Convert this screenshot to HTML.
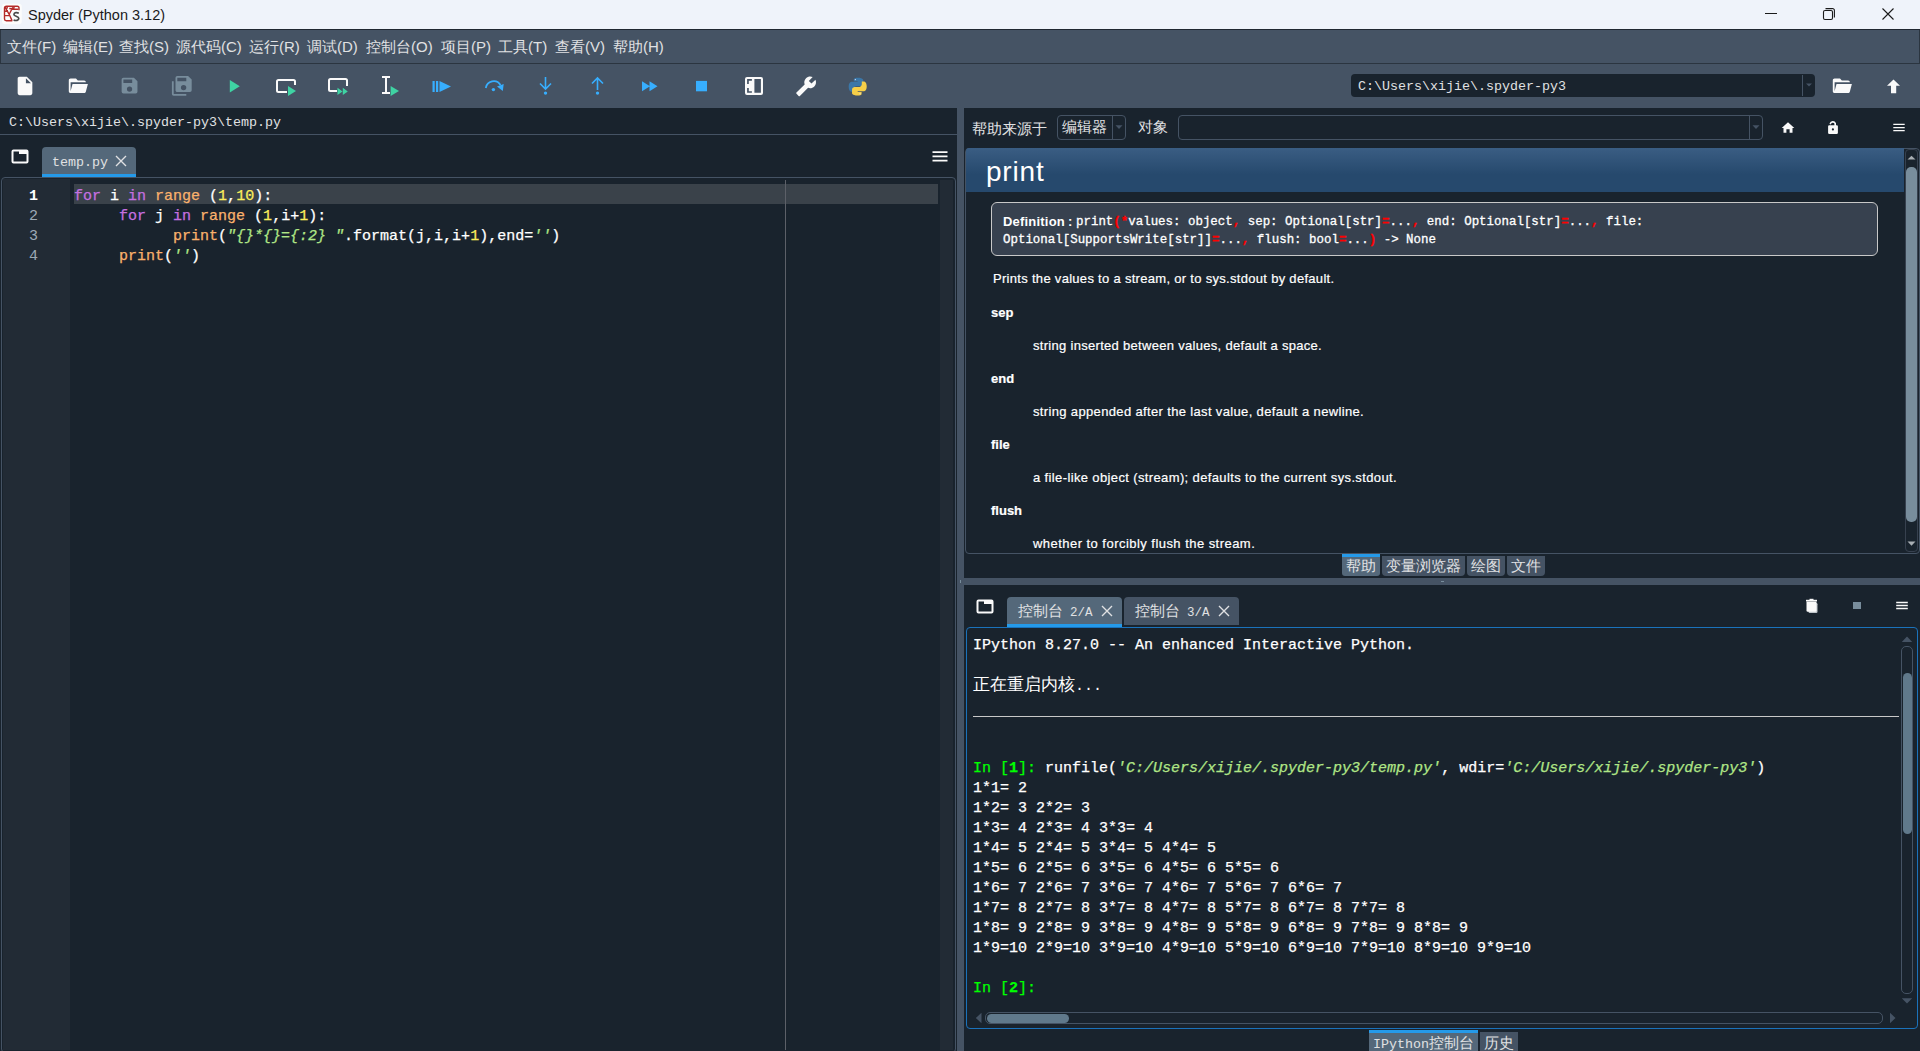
<!DOCTYPE html>
<html><head><meta charset="utf-8">
<style>
*{box-sizing:border-box}
html,body{margin:0;padding:0}
body{width:1920px;height:1051px;overflow:hidden;position:relative;background:#19232D;font-family:"Liberation Sans",sans-serif;color:#E0E1E3}
.a{position:absolute}
.mono{font-family:"Liberation Mono",monospace}
.cs{-webkit-text-stroke-width:0.25px}
.mi{position:absolute;top:37px;font-size:15px;line-height:20px;color:#E0E1E3;white-space:nowrap}
.ic{position:absolute}
.hp{position:absolute;font-size:13px;line-height:18px;letter-spacing:0.35px;-webkit-text-stroke-width:0.2px;color:#FFFFFF;white-space:nowrap}
.tab{position:absolute;border-radius:4px 4px 0 0;white-space:nowrap;color:#E0E1E3}
</style></head><body>
<!-- title bar -->
<div class="a" style="left:0;top:0;width:1920px;height:29px;background:#EFF3FA"></div>
<div class="a" style="left:0;top:29px;width:1920px;height:1px;background:#1F2730"></div>
<!-- spyder icon -->
<svg class="ic" style="left:0;top:0" width="26" height="28" viewBox="0 0 26 28">
<rect x="2" y="3.7" width="19.8" height="20.6" rx="3" fill="#FCFCFC"/>
<g fill="none" stroke="#B42A2A" stroke-width="1.4" stroke-linejoin="round">
<path d="M12.3,20.8 H6.3 A1.8,1.8 0 0 1 4.5,19 V8.3 A2,2 0 0 1 6.5,6.3 H17.2 A1.8,1.8 0 0 1 19,8.1 V10.2"/>
<path d="M5,7.2 L9.2,14.3 L12,20.6 M12.8,7.2 L9.2,14.3 M9.3,8.5 L18.5,9.3 M4.6,11.3 L8,11 M4.6,15.6 L9.6,15.4 M7.4,6.5 L6.8,8.8 M14.2,6.6 L13.6,9"/>
</g>
<path d="M18.8,13.2 C17.2,12.3 14.2,12.3 13.9,14.3 C13.6,16.4 18.6,16 18.8,18.3 C19,20.4 15.8,21 13.6,20" fill="none" stroke="#4A4A4A" stroke-width="1.7"/>
</svg>
<div class="a" style="left:28px;top:6px;font-size:14.5px;line-height:18px;color:#1A1A1A;white-space:nowrap">Spyder (Python 3.12)</div>
<!-- window controls -->
<div class="a" style="left:1765px;top:13px;width:12px;height:1px;background:#1A1A1A"></div>
<svg class="ic" style="left:1822px;top:7px" width="14" height="14" viewBox="0 0 14 14"><rect x="1.5" y="3.5" width="9" height="9" rx="1.5" fill="none" stroke="#1A1A1A" stroke-width="1.1"/><path d="M3.5 1.6 H10 A2 2 0 0 1 12.4 4 V10.5" fill="none" stroke="#1A1A1A" stroke-width="1.1"/></svg>
<svg class="ic" style="left:1882px;top:8px" width="12" height="12" viewBox="0 0 12 12"><path d="M0.5 0.5 L11.5 11.5 M11.5 0.5 L0.5 11.5" stroke="#1A1A1A" stroke-width="1.1"/></svg>

<!-- menu bar -->
<div class="a" style="left:0;top:30px;width:1920px;height:33px;background:#455364"></div>
<div class="a" style="left:0;top:30px;width:1px;height:33px;background:#2B3540"></div><div class="a" style="left:1919px;top:30px;width:1px;height:33px;background:#2B3540"></div>
<div class="mi" style="left:7px">文件(F)</div>
<div class="mi" style="left:63px">编辑(E)</div>
<div class="mi" style="left:119px">查找(S)</div>
<div class="mi" style="left:176px">源代码(C)</div>
<div class="mi" style="left:249px">运行(R)</div>
<div class="mi" style="left:307px">调试(D)</div>
<div class="mi" style="left:366px">控制台(O)</div>
<div class="mi" style="left:441px">项目(P)</div>
<div class="mi" style="left:498px">工具(T)</div>
<div class="mi" style="left:555px">查看(V)</div>
<div class="mi" style="left:613px">帮助(H)</div>

<div class="a" style="left:0;top:63px;width:1920px;height:1px;background:#2B3540"></div>
<!-- toolbar -->
<div class="a" style="left:0;top:64px;width:1920px;height:44px;background:#455364"></div>
<!-- toolbar icons -->
<svg class="ic" style="left:14.3px;top:75.2px" width="22" height="22" viewBox="0 0 24 24"><path fill="#FAFAFA" d="M13,9V3.5L18.5,9M6,2C4.89,2 4,2.89 4,4V20A2,2 0 0,0 6,22H18A2,2 0 0,0 20,20V8L14,2H6Z"/></svg>
<svg class="ic" style="left:66.7px;top:75.2px" width="21.6" height="21.6" viewBox="0 0 24 24"><path fill="#FAFAFA" d="M19,20H4C2.89,20 2,19.1 2,18V6C2,4.89 2.89,4 4,4H10L12,6H19A2,2 0 0,1 21,8H21L4,8V18L6.14,10H23.21L20.93,18.5C20.7,19.37 19.92,20 19,20Z"/></svg>
<svg class="ic" style="left:118.9px;top:75.4px" width="21.1" height="21.1" viewBox="0 0 24 24"><path fill="#788D9C" d="M15,9H5V5H15M12,19A3,3 0 0,1 9,16A3,3 0 0,1 12,13A3,3 0 0,1 15,16A3,3 0 0,1 12,19M17,3H5C3.89,3 3,3.9 3,5V19A2,2 0 0,0 5,21H19A2,2 0 0,0 21,19V7L17,3Z"/></svg>
<svg class="ic" style="left:170.6px;top:75px" width="21.6" height="21.6" viewBox="0 0 24 24"><path fill="#788D9C" d="M17,7V3H7V7H17M14,17A3,3 0 0,0 17,14A3,3 0 0,0 14,11A3,3 0 0,0 11,14A3,3 0 0,0 14,17M19,1L23,5V17A2,2 0 0,1 21,19H7C5.89,19 5,18.1 5,17V3A2,2 0 0,1 7,1H19M1,7H3V21H17V23H3A2,2 0 0,1 1,21V7Z"/></svg>
<svg class="ic" style="left:0;top:64px" width="960" height="44" viewBox="0 64 960 44">
 <!-- run -->
 <path fill="#3FD3A3" d="M229.8,80 L239.8,86.25 L229.8,92.5Z"/>
 <!-- run cell -->
 <path fill="none" stroke="#FAFAFA" stroke-width="2" d="M287,92 H278.5 A1.5,1.5 0 0 1 277,90.5 V81.5 A1.5,1.5 0 0 1 278.5,80 H293.5 A1.5,1.5 0 0 1 295,81.5 V85"/>
 <path fill="#3FD3A3" d="M288,86 L296,91 L288,96Z"/>
 <!-- run cell advance -->
 <path fill="none" stroke="#FAFAFA" stroke-width="2" d="M337,91 H330.5 A1.5,1.5 0 0 1 329,89.5 V80.5 A1.5,1.5 0 0 1 330.5,79 H345.5 A1.5,1.5 0 0 1 347,80.5 V86"/>
 <path fill="#3FD3A3" d="M337.5,87.8 L342.5,91.4 L337.5,95Z M342.8,87.8 L347.8,91.4 L342.8,95Z"/>
 <!-- run selection -->
 <path fill="none" stroke="#FAFAFA" stroke-width="2" d="M382,77 H390 M382,93 H390 M386,77 V93"/>
 <path fill="#3FD3A3" d="M390.6,86 L399,91 L390.6,96Z"/>
 <!-- debug -->
 <path fill="#37AEFE" d="M432.5,81 H434.7 V92 H432.5Z M436,81 H438.2 V92 H436Z M439.5,81 L451,86.5 L439.5,92Z"/>
 <!-- step over -->
 <path fill="none" stroke="#37AEFE" stroke-width="1.8" d="M485.8,88 A8,8 0 0 1 500.5,85"/>
 <path fill="#37AEFE" d="M497,86.5 L503.7,84 L502.8,91 Z"/>
 <circle cx="493.4" cy="89.6" r="1.7" fill="#37AEFE"/>
 <!-- step into -->
 <path fill="none" stroke="#37AEFE" stroke-width="1.6" d="M545.5,77 V89 M540,83.5 L545.5,89 L551,83.5"/>
 <circle cx="545.5" cy="93.1" r="1.7" fill="#37AEFE"/>
 <!-- step out -->
 <path fill="none" stroke="#37AEFE" stroke-width="1.6" d="M597.5,78 V90 M592,83.5 L597.5,78 L603,83.5"/>
 <circle cx="597.5" cy="93.1" r="1.7" fill="#37AEFE"/>
 <!-- continue -->
 <path fill="#37AEFE" d="M642,81.2 L650,86.2 L642,91.2Z M649.5,81.2 L657.5,86.2 L649.5,91.2Z"/>
 <!-- stop -->
 <rect x="696" y="80.9" width="11" height="10.4" fill="#37AEFE"/>
 <!-- maximize -->
 <path fill="#FAFAFA" fill-rule="evenodd" d="M747,77 H761 A2,2 0 0 1 763,79 V93 A2,2 0 0 1 761,95 H747 A2,2 0 0 1 745,93 V79 A2,2 0 0 1 747,77Z M754.4,79.1 H760.9 V92.7 H754.4Z M747.1,79.1 H751.9 V80.8 H748.8 V83.9 H747.1Z M747.1,87.9 H748.8 V91.3 H751.9 V92.7 H747.1Z"/>
 <!-- wrench -->
 <g transform="translate(816.9,75.5) scale(-0.9,0.9)"><path fill="#FAFAFA" d="M22.7,19L13.6,9.9C14.5,7.6 14,4.9 12.1,3C10.1,1 7.1,0.6 4.7,1.7L9,6L6,9L1.6,4.7C0.4,7.1 0.9,10.1 2.9,12.1C4.8,14 7.5,14.5 9.8,13.6L18.9,22.7C19.3,23.1 19.9,23.1 20.3,22.7L22.6,20.4C23.1,20 23.1,19.3 22.7,19Z"/></g>
 <g transform="translate(857.7,86.6) scale(0.93) translate(-857.7,-86.6)">
 <!-- python -->
 <path fill="#3B77A8" d="M857.6,77 C853.2,77 853.5,78.9 853.5,78.9 L853.5,80.9 L857.7,80.9 L857.7,81.5 L851.8,81.5 C851.8,81.5 848,81.1 848,86.7 C848,92.3 851.3,92.1 851.3,92.1 L853.3,92.1 L853.3,89.5 C853.3,89.5 853.2,86.2 856.5,86.2 L860.7,86.2 C860.7,86.2 863.8,86.3 863.8,83.2 L863.8,80 C863.8,80 864.3,77 857.6,77Z"/>
 <path fill="#F6CF48" d="M857.8,96.2 C862.2,96.2 861.9,94.3 861.9,94.3 L861.9,92.3 L857.7,92.3 L857.7,91.7 L863.6,91.7 C863.6,91.7 867.4,92.1 867.4,86.5 C867.4,80.9 864.1,81.1 864.1,81.1 L862.1,81.1 L862.1,83.7 C862.1,83.7 862.2,87 858.9,87 L854.7,87 C854.7,87 851.6,86.9 851.6,90 L851.6,93.2 C851.6,93.2 851.1,96.2 857.8,96.2Z"/>
 <circle cx="855.2" cy="79" r="0.7" fill="#DDE"/>
 <circle cx="860.2" cy="94.2" r="0.7" fill="#DDE"/>
 </g>
</svg>
<!-- working dir combo -->
<div class="a" style="left:1351px;top:74px;width:464px;height:23px;background:#19232D;border-radius:4px"></div>
<div class="a" style="left:1802px;top:75px;width:1px;height:21px;background:#455364"></div>
<svg class="ic" style="left:1804px;top:80px" width="10" height="10" viewBox="0 0 10 10"><path d="M2,3.5 L8,3.5 L5,6.5Z" fill="#455364"/></svg>
<div class="a mono" style="left:1358px;top:78px;font-size:13.33px;line-height:18px;color:#E0E1E3;white-space:nowrap">C:\Users\xijie\.spyder-py3</div>
<svg class="ic" style="left:1830.5px;top:75px" width="21.6" height="21.6" viewBox="0 0 24 24"><path fill="#FAFAFA" d="M19,20H4C2.89,20 2,19.1 2,18V6C2,4.89 2.89,4 4,4H10L12,6H19A2,2 0 0,1 21,8H21L4,8V18L6.14,10H23.21L20.93,18.5C20.7,19.37 19.92,20 19,20Z"/></svg>
<svg class="ic" style="left:1885px;top:76px" width="17" height="20" viewBox="0 0 17 20"><path fill="#FAFAFA" d="M8.5,3.5 L15,9.7 L11.2,9.7 L11.2,17.3 L6,17.3 L6,9.7 L2,9.7Z"/></svg>



<!-- ===== EDITOR PANE ===== -->
<div class="a mono" style="left:9px;top:114px;font-size:13.33px;line-height:18px;color:#E0E1E3;white-space:nowrap">C:\Users\xijie\.spyder-py3\temp.py</div>
<div class="a" style="left:0;top:134px;width:957px;height:1px;background:#455364"></div>
<svg class="ic" style="left:11px;top:149px" width="18" height="15" viewBox="0 0 18 15"><rect x="1.5" y="1.5" width="15" height="12" rx="1" fill="none" stroke="#FAFAFA" stroke-width="2"/><rect x="8" y="1" width="9" height="4" fill="#FAFAFA"/></svg>
<div class="tab" style="left:42px;top:147px;width:94px;height:30px;background:#54687A"></div>
<div class="a" style="left:42px;top:174px;width:94px;height:3px;background:#259AE9"></div>
<div class="a mono" style="left:52px;top:154px;font-size:13.33px;line-height:18px;color:#E0E1E3;white-space:nowrap">temp.py</div>
<svg class="ic" style="left:115px;top:155px" width="12" height="12" viewBox="0 0 12 12"><path d="M1,1 L11,11 M11,1 L1,11" stroke="#E0E1E3" stroke-width="1.35"/></svg>
<svg class="ic" style="left:932px;top:151px" width="16" height="11" viewBox="0 0 16 11"><path d="M0.5,1.2 H15.5 M0.5,5.4 H15.5 M0.5,9.6 H15.5" stroke="#FAFAFA" stroke-width="1.8"/></svg>
<!-- editor frame -->
<div class="a" style="left:1px;top:177px;width:955px;height:876px;border:1px solid #455364;border-radius:4px"></div>
<div class="a" style="left:3px;top:179px;width:67px;height:871px;background:#222B35"></div>
<div class="a" style="left:940px;top:180px;width:13px;height:870px;background:#222B35"></div>
<div class="a" style="left:74px;top:184px;width:864px;height:20px;background:#3A424A"></div>
<div class="a" style="left:785px;top:180px;width:1px;height:870px;background:#5C6068"></div>
<div class="a mono" style="left:0;top:187px;width:70px;font-size:15px;line-height:20px;color:#9DA9B5">
<div style="position:absolute;left:29px;top:0;color:#FFFFFF;font-weight:bold">1</div>
<div style="position:absolute;left:29px;top:20px">2</div>
<div style="position:absolute;left:29px;top:40px">3</div>
<div style="position:absolute;left:29px;top:60px">4</div>
</div>
<div class="a mono cs" style="left:74px;top:187px;font-size:15px;line-height:20px;color:#FFFFFF;white-space:pre"><div><span style="color:#C670E0">for</span> i <span style="color:#C670E0">in</span> <span style="color:#FAB16C">range</span> (<span style="color:#FAED5C">1</span>,<span style="color:#FAED5C">10</span>):</div><div>     <span style="color:#C670E0">for</span> j <span style="color:#C670E0">in</span> <span style="color:#FAB16C">range</span> (<span style="color:#FAED5C">1</span>,i+<span style="color:#FAED5C">1</span>):</div><div>           <span style="color:#FAB16C">print</span>(<span style="color:#B0E686;font-style:italic">"{}*{}={:2} "</span>.format(j,i,i+<span style="color:#FAED5C">1</span>),end=<span style="color:#B0E686;font-style:italic">''</span>)</div><div>     <span style="color:#FAB16C">print</span>(<span style="color:#B0E686;font-style:italic">''</span>)</div></div>


<!-- ===== HELP PANE ===== -->
<div class="mi" style="left:972px;top:118.5px">帮助来源于</div>
<div class="a" style="left:1057px;top:115px;width:69px;height:25px;border:1px solid #455364;border-radius:4px"></div>
<div class="a" style="left:1112px;top:116px;width:1px;height:23px;background:#455364"></div>
<svg class="ic" style="left:1114px;top:122px" width="10" height="10" viewBox="0 0 10 10"><path d="M1.5,3.2 L8.5,3.2 L5,7Z" fill="#455364"/></svg>
<div class="mi" style="left:1062px;top:116.5px">编辑器</div>
<div class="mi" style="left:1138px;top:117px">对象</div>
<div class="a" style="left:1178px;top:115px;width:585px;height:25px;border:1px solid #455364;border-radius:4px"></div>
<div class="a" style="left:1749px;top:116px;width:1px;height:23px;background:#455364"></div>
<svg class="ic" style="left:1751px;top:122px" width="10" height="10" viewBox="0 0 10 10"><path d="M1.5,3.2 L8.5,3.2 L5,7Z" fill="#455364"/></svg>
<svg class="ic" style="left:1781px;top:121px" width="14" height="13" viewBox="0 0 14 13"><path fill="#FAFAFA" d="M7,1.3 L13.3,7 L11.5,7 L11.5,11.8 L8.6,11.8 L8.6,8.3 L5.4,8.3 L5.4,11.8 L2.5,11.8 L2.5,7 L0.7,7Z"/></svg>
<svg class="ic" style="left:1827px;top:120px" width="12" height="15" viewBox="0 0 12 15"><path fill="none" stroke="#FAFAFA" stroke-width="1.6" stroke-linecap="round" d="M3.4,3.6 A2.6,2.6 0 0 1 8.2,3.3 V6"/><rect x="1.1" y="5.2" width="9.8" height="8.8" rx="1.2" fill="#FAFAFA"/><circle cx="5.9" cy="9.4" r="1.1" fill="#19232D"/></svg>
<svg class="ic" style="left:1893px;top:123px" width="12" height="9" viewBox="0 0 12 9"><path d="M0.3,1.4 H11.7 M0.3,4.6 H11.7 M0.3,7.6 H11.7" stroke="#FAFAFA" stroke-width="1.2"/></svg>
<!-- help frame -->
<div class="a" style="left:965px;top:148px;width:955px;height:406px;border:1px solid #455364;border-radius:4px"></div>
<div class="a" style="left:966px;top:148px;width:938px;height:44px;background:linear-gradient(#3A5D83,#26496D 60%,#26496D);border-radius:3px 0 0 0"></div>
<div class="a" style="left:986px;top:155px;font-size:28px;line-height:34px;letter-spacing:0.8px;color:#FFFFFF;white-space:nowrap">print</div>
<div class="a" style="left:991px;top:202px;width:887px;height:54px;background:#37414F;border:1px solid #C8C8C8;border-radius:6px"></div>
<div class="a" style="left:1003px;top:213px;font-size:13px;line-height:18px;color:#FFFFFF;white-space:nowrap"><b style="letter-spacing:0.2px">Definition</b></div><div class="a" style="left:1068px;top:213px;font-size:13px;line-height:18px;color:#FFFFFF"><b>:</b></div>
<div class="a mono" style="left:1076px;top:213px;font-size:12.45px;-webkit-text-stroke-width:0.3px;line-height:18px;color:#FFFFFF;white-space:pre">print<b style="color:#FF0000">(*</b>values: object<b style="color:#FF0000">,</b> sep: Optional[str]<b style="color:#FF0000">=</b>...<b style="color:#FF0000">,</b> end: Optional[str]<b style="color:#FF0000">=</b>...<b style="color:#FF0000">,</b> file:</div>
<div class="a mono" style="left:1003px;top:231px;font-size:12.45px;-webkit-text-stroke-width:0.3px;line-height:18px;color:#FFFFFF;white-space:pre">Optional[SupportsWrite[str]]<b style="color:#FF0000">=</b>...<b style="color:#FF0000">,</b> flush: bool<b style="color:#FF0000">=</b>...<b style="color:#FF0000">)</b> -&gt; None</div>
<div class="a hp" style="left:993px;top:270px;letter-spacing:0.3px">Prints the values to a stream, or to sys.stdout by default.</div>
<div class="a hp" style="left:991px;top:304px;font-weight:bold;letter-spacing:0">sep</div>
<div class="a hp" style="left:1033px;top:337px;letter-spacing:0.3px">string inserted between values, default a space.</div>
<div class="a hp" style="left:991px;top:370px;font-weight:bold;letter-spacing:0">end</div>
<div class="a hp" style="left:1033px;top:403px">string appended after the last value, default a newline.</div>
<div class="a hp" style="left:991px;top:436px;font-weight:bold;letter-spacing:0">file</div>
<div class="a hp" style="left:1033px;top:469px;letter-spacing:0.37px">a file-like object (stream); defaults to the current sys.stdout.</div>
<div class="a hp" style="left:991px;top:502px;font-weight:bold;letter-spacing:0">flush</div>
<div class="a hp" style="left:1033px;top:535px;letter-spacing:0.46px">whether to forcibly flush the stream.</div>
<!-- help scrollbar -->
<div class="a" style="left:1905px;top:149px;width:13px;height:403px;background:#19232D;border:1px solid #37414F;border-radius:4px"></div>
<svg class="ic" style="left:1906px;top:152px" width="11" height="10" viewBox="0 0 11 10"><path d="M1.5,7.5 L9.5,7.5 L5.5,3.8Z" fill="#A9AFB4"/></svg>
<div class="a" style="left:1906px;top:166.5px;width:11px;height:355px;background:#788D9C;border-radius:5px"></div>
<svg class="ic" style="left:1906px;top:538px" width="11" height="10" viewBox="0 0 11 10"><path d="M1.5,3.5 L9.5,3.5 L5.5,7.7Z" fill="#A9AFB4"/></svg>
<!-- help tabs -->
<div class="tab" style="left:1342px;top:554px;width:38px;height:22px;background:#54687A;border-radius:0 0 3px 3px"></div>
<div class="a" style="left:1342px;top:554px;width:38px;height:3px;background:#259AE9"></div>
<div class="tab" style="left:1382px;top:556px;width:83px;height:20px;background:#455364;border-radius:0 0 4px 4px"></div>
<div class="tab" style="left:1467px;top:556px;width:38px;height:20px;background:#455364;border-radius:0 0 4px 4px"></div>
<div class="tab" style="left:1507px;top:556px;width:38px;height:20px;background:#455364;border-radius:0 0 4px 4px"></div>
<div class="mi" style="left:1346px;top:556px">帮助</div>
<div class="mi" style="left:1386px;top:556px">变量浏览器</div>
<div class="mi" style="left:1471px;top:556px">绘图</div>
<div class="mi" style="left:1511px;top:556px">文件</div>


<!-- ===== CONSOLE PANE ===== -->
<svg class="ic" style="left:976px;top:599px" width="18" height="15" viewBox="0 0 18 15"><rect x="1.5" y="1.5" width="15" height="12" rx="1" fill="none" stroke="#FAFAFA" stroke-width="2"/><rect x="8" y="1" width="9" height="4" fill="#FAFAFA"/></svg>
<div class="tab" style="left:1007px;top:597px;width:115px;height:30px;background:#54687A"></div>
<div class="a" style="left:1007px;top:624px;width:115px;height:3px;background:#259AE9"></div>
<div class="tab" style="left:1124px;top:597px;width:115px;height:28px;background:#455364"></div>
<div class="mi" style="left:1017.5px;top:601px">控制台<span class="mono" style="font-size:12.5px"> 2/A</span></div>
<div class="mi" style="left:1134.5px;top:601px">控制台<span class="mono" style="font-size:12.5px"> 3/A</span></div>
<svg class="ic" style="left:1101px;top:605px" width="12" height="12" viewBox="0 0 12 12"><path d="M1,1 L11,11 M11,1 L1,11" stroke="#E0E1E3" stroke-width="1.35"/></svg>
<svg class="ic" style="left:1218px;top:605px" width="12" height="12" viewBox="0 0 12 12"><path d="M1,1 L11,11 M11,1 L1,11" stroke="#E0E1E3" stroke-width="1.35"/></svg>
<svg class="ic" style="left:1805px;top:598px" width="14" height="16" viewBox="0 0 14 16"><rect x="3.5" y="5" width="9" height="10" rx="1.2" fill="#BFC5CA"/><path fill="#FAFAFA" d="M1.5,3.5 H11.5 V12.5 A1.2,1.2 0 0 1 10.3,13.7 H2.7 A1.2,1.2 0 0 1 1.5,12.5Z"/><rect x="1" y="1.8" width="11" height="1.6" fill="#FAFAFA"/><rect x="4.5" y="0.8" width="4" height="1.2" fill="#FAFAFA"/></svg>
<div class="a" style="left:1853px;top:601.7px;width:8px;height:7.5px;background:#788D9C"></div>
<svg class="ic" style="left:1896px;top:601px" width="12" height="9" viewBox="0 0 12 9"><path d="M0.2,1.5 H11.8 M0.2,4.5 H11.8 M0.2,7.5 H11.8" stroke="#FAFAFA" stroke-width="1.3"/></svg>
<!-- console frame -->
<div class="a" style="left:966px;top:627px;width:952px;height:402px;border:1px solid #1A72BB;border-radius:4px"></div>
<div class="a mono cs" style="left:973px;top:636px;font-size:15px;line-height:20px;color:#FFFFFF;white-space:pre">IPython 8.27.0 -- An enhanced Interactive Python.</div>
<div class="a mono" style="left:973px;top:676px;font-size:15px;line-height:20px;color:#FFFFFF;white-space:pre"><span style="font-size:17px">正在重启内核</span>...</div>
<div class="a" style="left:973px;top:716px;width:926px;height:1px;background:#C8C8C8"></div>
<div class="a mono cs" style="left:973px;top:759px;font-size:15px;line-height:20px;color:#FFFFFF;white-space:pre"><span style="color:#00FF00">In [<b>1</b>]:</span> runfile(<i style="color:#B0E686">'C:/Users/xijie/.spyder-py3/temp.py'</i>, wdir=<i style="color:#B0E686">'C:/Users/xijie/.spyder-py3'</i>)
1*1= 2
1*2= 3 2*2= 3
1*3= 4 2*3= 4 3*3= 4
1*4= 5 2*4= 5 3*4= 5 4*4= 5
1*5= 6 2*5= 6 3*5= 6 4*5= 6 5*5= 6
1*6= 7 2*6= 7 3*6= 7 4*6= 7 5*6= 7 6*6= 7
1*7= 8 2*7= 8 3*7= 8 4*7= 8 5*7= 8 6*7= 8 7*7= 8
1*8= 9 2*8= 9 3*8= 9 4*8= 9 5*8= 9 6*8= 9 7*8= 9 8*8= 9
1*9=10 2*9=10 3*9=10 4*9=10 5*9=10 6*9=10 7*9=10 8*9=10 9*9=10

<span style="color:#00FF00">In [<b>2</b>]:</span></div>
<!-- console v scrollbar -->
<svg class="ic" style="left:1901px;top:635px" width="12" height="8" viewBox="0 0 12 8"><path d="M0.8,7 L11.2,7 L6,1.6Z" fill="#455364"/></svg>
<div class="a" style="left:1901px;top:646px;width:12px;height:348px;border:1px solid #455364;border-radius:5px"></div>
<div class="a" style="left:1902.5px;top:673px;width:9px;height:161px;background:#60798B;border-radius:4.5px"></div>
<svg class="ic" style="left:1901px;top:997px" width="12" height="8" viewBox="0 0 12 8"><path d="M0.8,1.2 L11.2,1.2 L6,6.5Z" fill="#455364"/></svg>
<!-- console h scrollbar -->
<svg class="ic" style="left:975px;top:1012px" width="8" height="12" viewBox="0 0 8 12"><path d="M6.5,0.8 L6.5,11.2 L0.8,6Z" fill="#455364"/></svg>
<div class="a" style="left:985px;top:1012px;width:898px;height:12px;border:1px solid #455364;border-radius:5px"></div>
<div class="a" style="left:986.5px;top:1013.5px;width:82px;height:9px;background:#60798B;border-radius:4.5px"></div>
<svg class="ic" style="left:1889px;top:1012px" width="8" height="12" viewBox="0 0 8 12"><path d="M1,0.8 L1,11.2 L6.5,6Z" fill="#455364"/></svg>
<!-- bottom tabs -->
<div class="tab" style="left:1369px;top:1030px;width:109px;height:21px;background:#54687A;border-radius:0"></div>
<div class="a" style="left:1369px;top:1030px;width:109px;height:3px;background:#259AE9"></div>
<div class="tab" style="left:1480px;top:1032px;width:38px;height:19px;background:#455364;border-radius:0"></div>
<div class="mi" style="left:1373px;top:1033px"><span class="mono" style="font-size:13.33px">IPython</span>控制台</div>
<div class="mi" style="left:1484px;top:1033px">历史</div>

<!-- vertical splitter -->
<div class="a" style="left:957px;top:108px;width:7px;height:943px;background:#455364"></div>
<!-- horizontal splitter -->
<div class="a" style="left:964px;top:578px;width:956px;height:7px;background:#455364"></div>
<div class="a" style="left:960px;top:580px;width:1px;height:3px;background:#788D9C"></div>
<div class="a" style="left:1441px;top:581px;width:3px;height:1px;background:#788D9C"></div>

</body></html>
